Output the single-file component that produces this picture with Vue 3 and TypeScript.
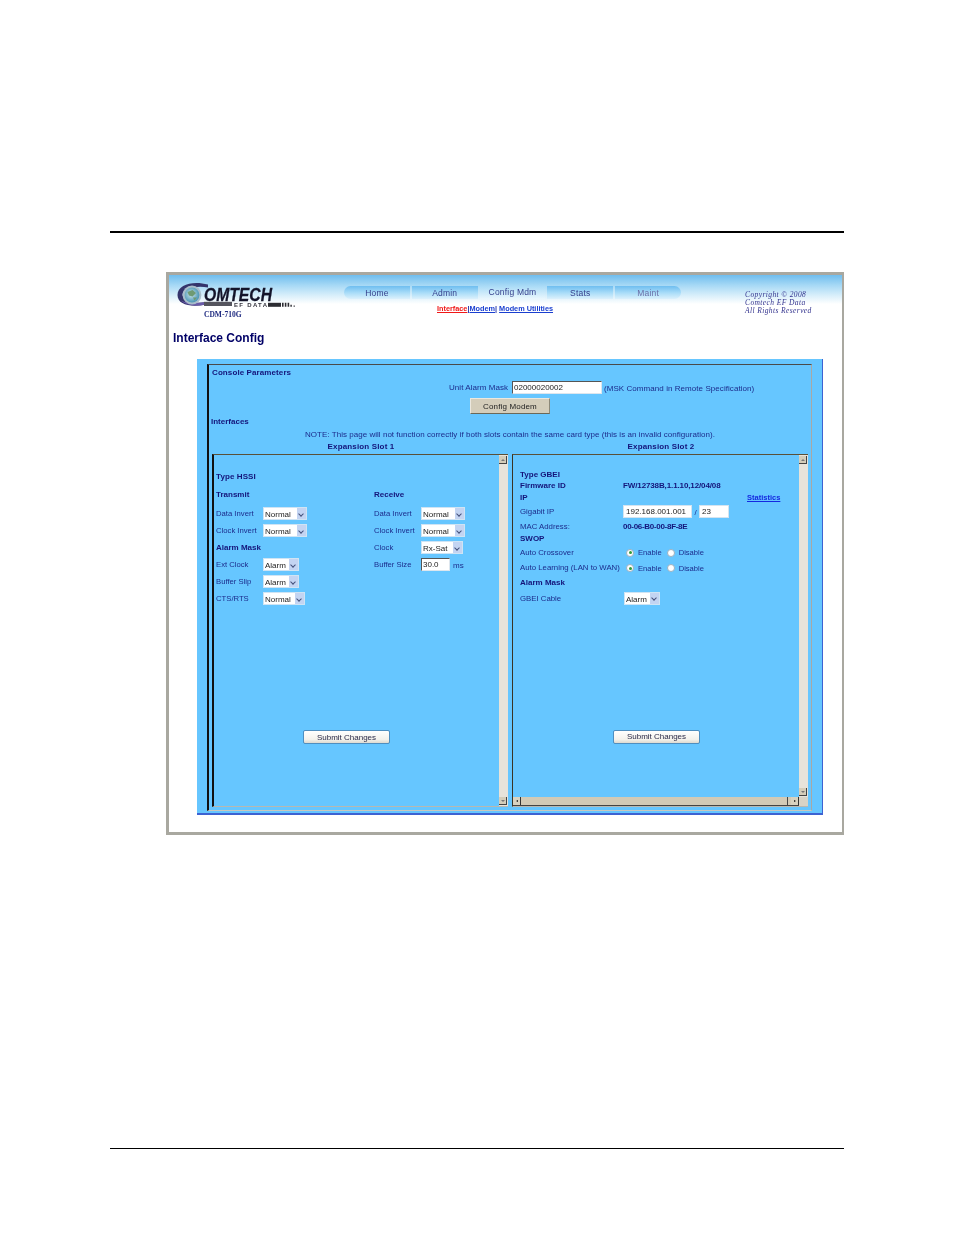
<script setup lang="ts">
interface Field { label: string; value: string; width: number; bold?: boolean }
const navItems = [
  { label: 'Home', cls: 'first' },
  { label: 'Admin', cls: '' },
  { label: 'Config Mdm', cls: 'active' },
  { label: 'Stats', cls: '' },
  { label: 'Maint', cls: 'last' },
]
const transmit: Field[] = [
  { label: 'Data Invert', value: 'Normal', width: 44 },
  { label: 'Clock Invert', value: 'Normal', width: 44 },
]
const alarm: Field[] = [
  { label: 'Ext Clock', value: 'Alarm', width: 36 },
  { label: 'Buffer Slip', value: 'Alarm', width: 36 },
  { label: 'CTS/RTS', value: 'Normal', width: 42 },
]
const receive: Field[] = [
  { label: 'Data Invert', value: 'Normal', width: 44 },
  { label: 'Clock Invert', value: 'Normal', width: 44 },
  { label: 'Clock', value: 'Rx-Sat', width: 42 },
]
</script>

<template>
  <div class="page">
    <div class="rule top"></div>
    <div class="shot">
      <header class="head">
        <div class="brand">
          <svg class="logo" width="120" height="30" viewBox="0 0 120 30">
            <defs>
              <radialGradient id="globe" cx="45%" cy="45%" r="60%">
                <stop offset="0" stop-color="#cfe6ec" />
                <stop offset="1" stop-color="#3f8fb0" />
              </radialGradient>
            </defs>
            <path d="M31 2.6 C17 -1.5 0.5 2 0.5 13 C0.5 23 14 25.5 29 22.5 L29 20 C20 21.5 6.5 21 5.5 13 C5 6 19 3.6 31 5.4 Z" fill="#34346c" />
            <path d="M4 18.5 C9 23.5 19 24.5 29 22.5 L29 20 C20 21.5 10 21.5 4 18.5 Z" fill="#6a5aa8" />
            <circle cx="15" cy="13" r="9.4" fill="#a9bdca" />
            <circle cx="15" cy="13" r="7.4" fill="url(#globe)" />
            <path d="M10.5 10 L15.5 8 L19 11 L15.5 14.5 L12 13.5 Z M16 15.5 L20 15.5 L17.5 18.5 Z" fill="#6f9a72" />
            <text x="27" y="18.6" class="logo-main" textLength="68" lengthAdjust="spacingAndGlyphs">OMTECH</text>
            <rect x="27" y="19.8" width="28" height="4.2" fill="#55555e" />
            <text x="57" y="25" class="logo-sub" textLength="33" lengthAdjust="spacing">EF DATA</text>
            <rect x="91" y="20.8" width="13" height="4" fill="#2c2c32" />
            <path d="M105 20.8h1.6v4H105zM107.8 20.8h1.6v4h-1.6zM110.6 20.8h1.6v4h-1.6zM113.4 22.8h1.4v2h-1.4zM116.6 23.5h1.2v1.3h-1.2z" fill="#2c2c32" />
          </svg>
          <div class="model">CDM-710G</div>
        </div>
        <div class="navwrap">
          <nav class="nav">
            <span v-for="n in navItems" :key="n.label" class="tab" :class="n.cls">{{ n.label }}</span>
          </nav>
          <div class="sub"><a class="red">Interface</a><span class="bar">|</span><a>Modem</a><span class="bar">|</span> <a>Modem Utilities</a></div>
        </div>
        <div class="copy">Copyright © 2008<br />Comtech EF Data<br />All Rights Reserved</div>
      </header>

      <h1 class="title">Interface Config</h1>

      <section class="panel">
        <div class="inner">
          <div class="b head-line">Console Parameters</div>
          <div class="mask-row">
            <span class="mask-label">Unit Alarm Mask</span>
            <span class="inp mask-inp">02000020002</span>
            <span class="mask-hint">(MSK Command in Remote Specification)</span>
          </div>
          <div class="cfg-row"><button class="cfg">Config Modem</button></div>
          <div class="b ifaces">Interfaces</div>
          <div class="note">NOTE: This page will not function correctly if both slots contain the same card type (this is an invalid configuration).</div>
          <div class="slots">
            <div class="b">Expansion Slot 1</div>
            <div class="b">Expansion Slot 2</div>
          </div>
          <div class="frames">
            <div class="frame left">
              <div class="content">
                <div class="b f-type">Type HSSI</div>
                <div class="cols">
                  <div class="col">
                    <div class="b f-head">Transmit</div>
                    <div v-for="f in transmit" :key="f.label" class="row">
                      <span class="lab">{{ f.label }}</span>
                      <span class="sel" :style="{ width: f.width + 'px' }">{{ f.value }}<i class="arrow"></i></span>
                    </div>
                    <div class="row b">Alarm Mask</div>
                    <div v-for="f in alarm" :key="f.label" class="row">
                      <span class="lab">{{ f.label }}</span>
                      <span class="sel" :style="{ width: f.width + 'px' }">{{ f.value }}<i class="arrow"></i></span>
                    </div>
                  </div>
                  <div class="col">
                    <div class="b f-head">Receive</div>
                    <div v-for="f in receive" :key="f.label" class="row">
                      <span class="lab">{{ f.label }}</span>
                      <span class="sel" :style="{ width: f.width + 'px' }">{{ f.value }}<i class="arrow"></i></span>
                    </div>
                    <div class="row">
                      <span class="lab">Buffer Size</span>
                      <span class="inp buf">30.0</span><span class="ms">ms</span>
                    </div>
                  </div>
                </div>
                <div class="submit-row s-left"><button class="submit">Submit Changes</button></div>
              </div>
              <div class="vbar">
                <span class="sbtn up"></span>
                <span class="sbtn down"></span>
              </div>
            </div>
            <div class="frame right">
              <div class="content">
                <div class="gb-top">
                  <div class="b g-line g1">Type GBEI</div>
                  <div class="g-line g2"><span class="b">Firmware ID</span><span class="b fw">FW/12738B,1.1.10,12/04/08</span></div>
                  <div class="g-line ip"><span class="b">IP</span><a class="stats">Statistics</a></div>
                </div>
                <div class="g-row gip"><span class="rlab">Gigabit IP</span><span class="ip-vals"><span class="inp ip1">192.168.001.001</span><span class="slash">/</span><span class="inp ip2">23</span></span></div>
                <div class="g-row mac"><span class="rlab">MAC Address:</span><span class="b macv">00-06-B0-00-8F-8E</span></div>
                <div class="b swop">SWOP</div>
                <div class="g-row radio-row r1">
                  <span class="rlab">Auto Crossover</span>
                  <span class="radios"><i class="radio on"></i>Enable<i class="radio"></i>Disable</span>
                </div>
                <div class="g-row radio-row">
                  <span class="rlab">Auto Learning (LAN to WAN)</span>
                  <span class="radios"><i class="radio on"></i>Enable<i class="radio"></i>Disable</span>
                </div>
                <div class="b amask">Alarm Mask</div>
                <div class="g-row cable"><span class="rlab">GBEI Cable</span><span class="sel w36">Alarm<i class="arrow"></i></span></div>
                <div class="submit-row s-right"><button class="submit">Submit Changes</button></div>
              </div>
              <div class="vbar">
                <span class="sbtn up"></span>
                <span class="sbtn down"></span>
              </div>
              <div class="hbar">
                <span class="hbtn l"></span>
                <span class="hbtn r"></span>
              </div>
              <div class="corner"></div>
            </div>
          </div>
        </div>
      </section>
    </div>
    <div class="rule bottom"></div>
  </div>
</template>

<style>
html, body { margin: 0; background: #fff; }
</style>

<style scoped>
.page {
  width: 954px;
  height: 1235px;
  padding-top: 231px;
  box-sizing: border-box;
  background: #fff;
  overflow: hidden;
  font-family: "Liberation Sans", Arial, sans-serif;
  font-size: 8px;
  color: #1c2c8c;
}
.rule { background: #000; margin: 0 110px; }
.rule.top { height: 2px; }
.rule.bottom { height: 1px; margin-top: 313px; }
.shot {
  margin: 39px 0 0 166px;
  width: 678px;
  height: 563px;
  box-sizing: border-box;
  border: 3px solid #a9a8a0;
  border-right-width: 2px;
  background: #fff;
  filter: blur(0.4px);
}
.b { font-weight: 700; color: #14147a; }
.head {
  height: 44px;
  display: flex;
  background: linear-gradient(#6fbdee 0, #a5d8f5 10px, #d6eefa 20px, #fff 29px);
}
.brand { width: 170px; padding: 7px 0 0 8px; box-sizing: border-box; }
.logo { display: block; overflow: visible; }
.logo-main { font: italic 700 17.5px "Liberation Sans", sans-serif; fill: #14142a; stroke: #14142a; stroke-width: 0.3px; }
.logo-sub { font: 700 6px "Liberation Sans", sans-serif; fill: #34343f; }
.model { font: 700 7.5px "Liberation Serif", serif; color: #1e2a80; margin: -1px 0 0 27px; line-height: 8px; }
.navwrap { width: 337px; margin-left: 5px; padding-top: 11px; }
.nav { display: flex; gap: 2px; height: 13px; }
.tab {
  flex: 1;
  line-height: 14px;
  text-align: center;
  font-size: 8.5px;
  color: #36408c;
  background: linear-gradient(#6fbef0, #a6dbf8 50%, #dcf1fc);
  letter-spacing: 0.2px;
}
.tab.first { border-radius: 7px 0 0 7px; }
.tab.last { border-radius: 0 7px 7px 0; color: #6a70a8; }
.tab.active { background: linear-gradient(#a9dbf7, #eaf7fd); line-height: 12px; }
.sub { margin-top: 5px; padding-left: 93px; font-weight: 700; font-size: 7.3px; line-height: 9px; color: #2233aa; }
.sub a { color: #1a3fd0; text-decoration: underline; }
.sub a.red { color: #f01818; }
.copy {
  margin: 16px 0 0 64px;
  font: italic 7.5px/8px "Liberation Serif", serif;
  color: #33338e;
  letter-spacing: 0.4px;
}
.title {
  margin: 11px 0 0 4px;
  font-size: 12px;
  line-height: 16px;
  font-weight: 700;
  color: #000066;
}
.panel {
  margin: 13px 0 0 28px;
  width: 626px;
  height: 456px;
  box-sizing: border-box;
  background: #66c6ff;
  border-bottom: 2px solid #3d62d2;
  border-right: 1px solid #3d62d2;
  padding: 5px 10px 2px 10px;
}
.inner {
  height: 100%;
  box-sizing: border-box;
  border: 1px solid #4a4a4a;
  border-left: 2px solid #111;
  border-right-color: #a8a8a4;
  border-bottom: 1px solid #c8c8c0;
  padding: 3px 2px 0 2px;
}
.head-line { line-height: 9px; margin-left: 1px; letter-spacing: 0.1px; }
.mask-row { display: flex; align-items: center; margin-top: 4px; height: 13px; }
.mask-label { width: 297px; text-align: right; letter-spacing: 0.05px; }
.inp {
  display: inline-block;
  box-sizing: border-box;
  background: #fff;
  color: #222;
  border: 1px solid #dde6ee;
  border-top-color: #555;
  border-left-color: #555;
  line-height: 11px;
  padding-left: 1px;
  font-size: 8px;
}
.mask-inp { width: 90px; height: 13px; margin-left: 4px; }
.mask-hint { margin-left: 2px; letter-spacing: 0.06px; padding-top: 2px; }
.cfg-row { margin-top: 4px; padding-left: 259px; height: 16px; }
.cfg {
  display: block;
  width: 80px;
  height: 16px;
  padding: 0;
  background: #d4cdba;
  border: 1px solid #8c8878;
  border-top-color: #ece8de;
  border-left-color: #ece8de;
  border-bottom-color: #6b6858;
  font: 8px "Liberation Sans", sans-serif;
  letter-spacing: 0.15px;
  color: #222;
}
.ifaces { margin: 3px 0 0 0; line-height: 9px; padding-top: 0; }
.note { text-align: center; margin-top: 4px; line-height: 9px; letter-spacing: 0.03px; }
.slots { display: grid; grid-template-columns: 300px 300px; margin-top: 3px; line-height: 9px; text-align: center; letter-spacing: 0.15px; }
.frames { display: flex; gap: 4px; margin-top: 3px; margin-left: 1px; }
.frame {
  position: relative;
  width: 296px;
  height: 353px;
  box-sizing: border-box;
  border-top: 1px solid #5a5038;
  border-left: 1px solid #3a3424;
  border-bottom: 1px solid #b8b8b0;
  display: flex;
}
.frame.left { border-left: 2px solid #111; }
.content { flex: 1; min-width: 0; padding-left: 2px; }
.vbar { width: 9px; background: #e7e3da; position: relative; flex: none; }
.sbtn {
  position: absolute;
  left: 0;
  width: 8px;
  height: 8px;
  background: #d4cdba;
  border-right: 1px solid #444;
  border-bottom: 1px solid #444;
  box-sizing: border-box;
}
.sbtn.up { top: 1px; }
.frame.left .sbtn.down { bottom: 1px; }
.frame.right .sbtn.down { bottom: 10px; }
.sbtn.up::after {
  content: "";
  position: absolute;
  left: 1.5px;
  top: 3px;
  border-left: 2px solid transparent;
  border-right: 2px solid transparent;
  border-bottom: 2px solid #777;
}
.sbtn.down::after {
  content: "";
  position: absolute;
  left: 1.5px;
  top: 3px;
  border-left: 2px solid transparent;
  border-right: 2px solid transparent;
  border-top: 2px solid #777;
}
.hbar {
  position: absolute;
  left: 0;
  bottom: 0;
  right: 9px;
  height: 9px;
  background: #d2cab6;
  border-bottom: 1px solid #444;
  box-sizing: border-box;
}
.hbar::after {
  content: "";
  position: absolute;
  right: 11px;
  top: 0;
  bottom: 0;
  width: 1px;
  background: #444;
}
.hbtn {
  position: absolute;
  top: 0;
  width: 8px;
  height: 8px;
  background: #d8d2c0;
  box-sizing: border-box;
  border-right: 1px solid #333;
}
.hbtn.l { left: 0; }
.hbtn.r { right: 0; }
.hbtn.l::after, .hbtn.r::after {
  content: "";
  position: absolute;
  top: 2.5px;
  left: 2.5px;
  border-top: 1.5px solid transparent;
  border-bottom: 1.5px solid transparent;
}
.hbtn.l::after { border-right: 2px solid #111; }
.hbtn.r::after { border-left: 2px solid #111; }
.corner { position: absolute; right: 0; bottom: 0; width: 9px; height: 9px; background: #d8d3c6; }

/* left pane */
.f-type { margin-top: 17px; line-height: 9px; font-size: 8px; letter-spacing: 0.1px; }
.cols { display: grid; grid-template-columns: 158px 1fr; margin-top: 9px; }
.f-head { height: 15px; line-height: 9px; }
.row { display: flex; align-items: center; height: 17px; line-height: 9px; }
.lab { width: 47px; flex: none; font-size: 7.7px; }
.sel {
  position: relative;
  display: inline-block;
  box-sizing: border-box;
  height: 13px;
  line-height: 13px;
  background: #fff;
  color: #222;
  padding-left: 1px;
  border: 1px solid #cfe4f4;
  font-size: 8px;
}
.w36 { width: 36px; }
.arrow {
  position: absolute;
  right: 0;
  top: 0;
  bottom: 0;
  width: 9px;
  background: #c3d4f2;
}
.arrow::after {
  content: "";
  position: absolute;
  left: 2px;
  top: 3.5px;
  width: 4px;
  height: 4px;
  border-right: 1px solid #44507a;
  border-bottom: 1px solid #44507a;
  transform: rotate(45deg);
  box-sizing: border-box;
}
.buf { width: 29px; height: 13px; }
.ms { margin-left: 3px; padding-top: 2px; }
.submit-row { display: flex; }
.s-left { margin: 123px 0 0 87px; }
.s-right { margin: 125px 0 0 93px; }
.submit {
  width: 87px;
  height: 14px;
  padding: 0;
  border-radius: 2px;
  border: 1px solid #4f8fc0;
  background: linear-gradient(#fff, #f4f2ec 70%, #dedad0);
  font: 8px "Liberation Sans", sans-serif;
  color: #2a2a48;
}

/* right pane */
.frame.right .content { padding-left: 7px; padding-bottom: 9px; }
.gb-top { padding-top: 15px; }
.g-line { line-height: 9px; height: 11.5px; }
.g1 { height: 11px; }
.g2 { height: 12px; }
.g2, .ip { display: grid; grid-template-columns: 103px 1fr; }
.ip { grid-template-columns: 226px 1fr; }
.fw { letter-spacing: -0.12px; }
.macv { letter-spacing: -0.3px; }
.rlab { font-size: 7.8px; }
.stats { color: #1428e0; font-weight: 700; font-size: 7.5px; text-decoration: underline; margin-left: 1px; }
.g-row { display: grid; grid-template-columns: 103px 1fr; align-items: center; line-height: 9px; }
.gip { height: 13px; margin-top: 0; }
.ip-vals { display: flex; align-items: center; }
.ip1 { width: 69px; height: 13px; padding-left: 2px; border-color: #d4e4f0; }
.ip2 { width: 30px; height: 13px; padding-left: 2px; border-color: #d4e4f0; }
.slash { width: 7px; text-align: center; padding-top: 2px; }
.mac { margin-top: 4px; }
.swop { margin-top: 3px; line-height: 9px; }
.radio-row { height: 15.5px; }
.r1 { margin-top: 2px; }
.radios { display: flex; align-items: center; padding-top: 1px; font-size: 7.6px; }
.radio {
  position: relative;
  width: 8px;
  height: 8px;
  flex: none;
  box-sizing: border-box;
  border-radius: 50%;
  background: #fff;
  border: 1px solid #9db0bf;
  margin: 0 4px 0 3px;
}
.radios .radio:nth-of-type(2) { margin-left: 5px; }
.radio.on::after {
  content: "";
  position: absolute;
  left: 1.5px;
  top: 1.5px;
  width: 3px;
  height: 3px;
  border-radius: 50%;
  background: #2f9a3a;
}
.amask { margin-top: 2px; line-height: 9px; }
.cable { height: 13px; margin-top: 5px; }
.cable .sel { margin-left: 1px; }
</style>
